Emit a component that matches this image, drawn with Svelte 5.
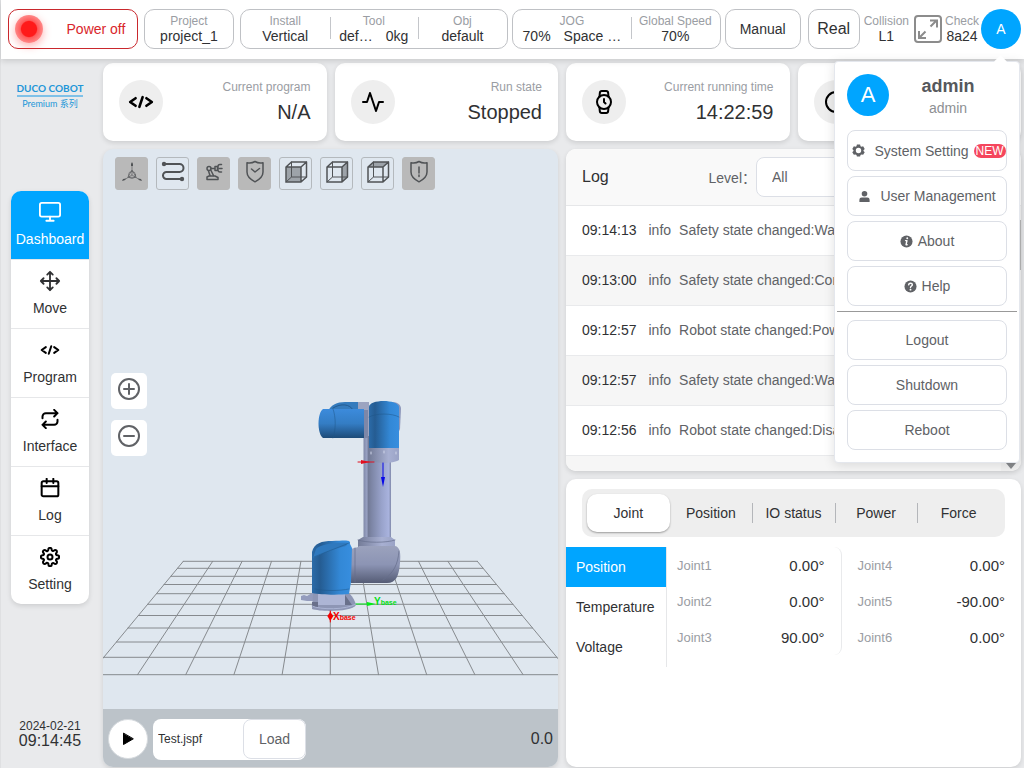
<script lang="ts">
    type LogRow = { time: string; level: string; text: string }
    type Joint = { name: string; value: string }

    const nav = ['Dashboard', 'Move', 'Program', 'Interface', 'Log', 'Setting']
    const tools = [
        { id: 'axes', label: 'Coordinate axes', on: true },
        { id: 'path', label: 'Trajectory', on: false },
        { id: 'arm', label: 'Robot model', on: true },
        { id: 'safe', label: 'Safety planes', on: true },
        { id: 'front', label: 'Front view', on: false },
        { id: 'right', label: 'Right view', on: false },
        { id: 'top', label: 'Top view', on: false },
        { id: 'alert', label: 'Collision shield', on: true },
    ]
    const stats = [
        { icon: 'code', label: 'Current program', value: 'N/A' },
        { icon: 'activity', label: 'Run state', value: 'Stopped' },
        { icon: 'watch', label: 'Current running time', value: '14:22:59' },
        { icon: 'clock', label: '', value: '' },
    ]
    const logs: LogRow[] = [
        { time: '09:14:13', level: 'info', text: 'Safety state changed:Warning' },
        { time: '09:13:00', level: 'info', text: 'Safety state changed:Control' },
        { time: '09:12:57', level: 'info', text: 'Robot state changed:Power' },
        { time: '09:12:57', level: 'info', text: 'Safety state changed:Warning' },
        { time: '09:12:56', level: 'info', text: 'Robot state changed:Disable' },
        { time: '', level: '', text: '' },
    ]
    const tabs = ['Joint', 'Position', 'IO status', 'Power', 'Force']
    const views = ['Position', 'Temperature', 'Voltage']
    const joints: Joint[][] = [
        [
            { name: 'Joint1', value: '0.00°' },
            { name: 'Joint2', value: '0.00°' },
            { name: 'Joint3', value: '90.00°' },
        ],
        [
            { name: 'Joint4', value: '0.00°' },
            { name: 'Joint5', value: '-90.00°' },
            { name: 'Joint6', value: '0.00°' },
        ],
    ]

    // floor grid of the 3D scene
    const center = 330.3
    const gridTop = 561.3
    const gridBottom = 674.7
    const rows = [561.3, 568.3, 576.3, 584.5, 593.7, 604.3, 615.5, 628, 642, 657.3, 674.7]
    const half = (y: number) => 147 + (94 * (y - gridTop)) / (gridBottom - gridTop)
    const cols = [-5, -4, -3, -2, -1, 0, 1, 2, 3, 4, 5]

    let page = $state('Dashboard')
    let tab = $state('Joint')
    let view = $state('Position')
    let level = $state('All')
    let menuOpen = $state(true)
</script>

{#snippet glyph(name: string)}
    <svg class="glyph" viewBox="0 0 24 24" aria-hidden="true">
        {#if name === 'Dashboard'}
            <rect x="1" y="2" width="22" height="15" rx="2" />
            <path d="M8 21.500h8M12 17v4" />
        {:else if name === 'Move'}
            <path d="M5 9l-3 3 3 3M9 5l3-3 3 3M15 19l-3 3-3-3M19 9l3 3-3 3M2 12h20M12 2v20" />
        {:else if name === 'Program' || name === 'code'}
            <path d="M7 8.500l-5 3.500 5 3.500M17 8.500l5 3.500-5 3.500M13.500 7.500l-3 9" />
        {:else if name === 'Interface'}
            <path d="M17 1l4 4-4 4M3 11V9a4 4 0 0 1 4-4h14M7 23l-4-4 4-4M21 13v2a4 4 0 0 1-4 4H3" />
        {:else if name === 'Log'}
            <rect x="2" y="4" width="20" height="18" rx="2" />
            <path d="M16 1v5M8 1v5M2 10h20" />
        {:else if name === 'Setting'}
            <circle cx="12" cy="12" r="3" />
            <path
                d="M19.400 15a1.650 1.650 0 0 0 .33 1.820l.06.06a2 2 0 1 1-2.830 2.830l-.06-.06a1.650 1.650 0 0 0-2.820 1.170V21a2 2 0 0 1-4 0v-.09A1.650 1.650 0 0 0 7.100 19.650l-.06.06a2 2 0 1 1-2.830-2.830l.06-.06A1.650 1.650 0 0 0 3.090 14H3a2 2 0 0 1 0-4h.09A1.650 1.650 0 0 0 4.270 7.180l-.06-.06a2 2 0 1 1 2.830-2.830l.06.06A1.650 1.650 0 0 0 10 3.090V3a2 2 0 0 1 4 0v.09a1.650 1.650 0 0 0 2.820 1.260l.06-.06a2 2 0 1 1 2.830 2.830l-.06.06A1.650 1.650 0 0 0 20.910 10H21a2 2 0 0 1 0 4h-.09a1.650 1.650 0 0 0-1.510 1z"
            />
        {:else if name === 'activity'}
            <path d="M22 12h-4l-3 9L9 3l-3 9H2" />
        {:else if name === 'watch'}
            <circle cx="12" cy="12" r="7" />
            <path
                d="M12 9v3l1.500 1.500M16.500 17.400l-.35 3.800a2 2 0 0 1-2 1.800H9.800a2 2 0 0 1-2-1.800l-.35-3.800M7.500 6.600l.35-3.800a2 2 0 0 1 2-1.800h4.300a2 2 0 0 1 2 1.800l.35 3.800"
            />
        {:else if name === 'clock'}
            <circle cx="12" cy="12" r="10" />
            <path d="M12 6v6l4 2" />
        {/if}
    </svg>
{/snippet}

{#snippet toolIcon(id: string)}
    <svg class="tool-icon" viewBox="1 1 31 31" aria-hidden="true">
        {#if id === 'axes'}
            <g class="thin">
                <path d="M17 7v11L9 23M17 18l8 5" />
                <circle cx="17" cy="18" r="3.500" />
                <path d="M13 20l4-7 4 7z" />
            </g>
            <path class="solid" d="M16 9v-2l1-2 1 2v2zM7 24l1-2 3-.5-1 1.500zM27 24l-1-2-3-.5 1 1.500z" />
        {:else if id === 'path'}
            <g class="thick"><path d="M8 7h15.500a4 4 0 0 1 0 8H10.500a3.500 3.500 0 0 0 0 7H26" /></g>
            <circle class="solid" cx="8" cy="7" r="2.200" />
            <circle class="solid" cx="26" cy="22" r="2.200" />
        {:else if id === 'arm'}
            <path d="M10 22.500v-2.500l2-1h6l3 1.500v2z" />
            <circle cx="12" cy="11.500" r="2" />
            <path d="M11.500 14l1.500 4.500M14 13.500l2.500 5M14 11.500h3.500" />
            <path d="M18 9.500h2.500v4h-2.500zM24.500 7.500h-1.500a2 2 0 0 0-2 2v4a2 2 0 0 0 2 1.500h1.500M22.500 11.500h2.500" />
        {:else if id === 'safe' || id === 'alert'}
            <path d="M17 4.500c-2.500 1.500-5.500 1.800-8 1.200v9.300c0 5 3.500 7.500 8 9.800 4.500-2.300 8-4.800 8-9.800V5.700c-2.500.6-5.500.3-8-1.200z" />
            {#if id === 'safe'}
                <path d="M13.500 12l3.500 3 4.500-3.500" />
            {:else}
                <path d="M17 10v6M17 18v1.500" />
            {/if}
        {:else}
            {#if id === 'front'}
                <path class="face" d="M7 10h15v15H7z" />
            {:else if id === 'right'}
                <path class="face" d="M22 10l5.500-5v15L22 25z" />
            {:else}
                <path class="face" d="M7 10l5.500-5h15L22 10z" />
            {/if}
            <path class="back" d="M12.500 5v15h15M12.500 20L7 25" />
            <path d="M7 10h15v15H7zM7 10l5.500-5h15v15L22 25M22 10l5.500-5" />
        {/if}
    </svg>
{/snippet}

<div class="app">
    <header>
        <button class="box power"><span class="lamp"></span><span class="power-text">Power off</span></button>
        <div class="box project">
            <div class="cell"><span class="label">Project</span><span>project_1</span></div>
        </div>
        <div class="box mount">
            <div class="cell"><span class="label">Install</span><span>Vertical</span></div>
            <div class="cell">
                <span class="label">Tool</span>
                <span class="pair"><span>def…</span><span>0kg</span></span>
            </div>
            <div class="cell"><span class="label">Obj</span><span>default</span></div>
        </div>
        <div class="box speed">
            <div class="cell jog">
                <span class="label">JOG</span>
                <span class="pair"><span>70%</span><span>Space …</span></span>
            </div>
            <div class="cell"><span class="label">Global Speed</span><span>70%</span></div>
        </div>
        <button class="box manual">Manual</button>
        <button class="box real">Real</button>
        <div class="cell collision"><span class="label">Collision</span><span>L1</span></div>
        <div class="account">
            <button class="expand" aria-label="Full screen">
                <svg viewBox="0 0 30 30" aria-hidden="true">
                    <rect x="2" y="2" width="26" height="26" rx="3" />
                    <path d="M17.500 12.500L23 7M17 6.500h7v7M12.500 17.500L6.500 23.500M6 17v7h7" />
                </svg>
            </button>
            <div class="cell"><span class="label">Check</span><span>8a24</span></div>
            <button class="avatar" aria-label="Account" onclick={() => (menuOpen = !menuOpen)}>A</button>
        </div>

        {#if menuOpen}
            <div class="menu">
                <div class="who">
                    <span class="avatar big">A</span>
                    <div class="who-text"><strong>admin</strong><span>admin</span></div>
                </div>
                <button class="tall">
                    <svg class="mini" viewBox="0 0 14 14" aria-hidden="true">
                        <path
                            fill-rule="evenodd"
                            d="M5.300.5h3.400l.5 1.800 1 .6 1.800-.5 1.700 2.900L12.400 6.600v1l1.300 1.200-1.700 2.900-1.800-.5-1 .6-.5 1.700H5.300l-.5-1.700-1-.6-1.800.5L.3 8.800l1.300-1.200v-1L.3 5.300 2 2.400l1.800.5 1-.6zM7 4.100a2.900 2.900 0 1 0 0 5.800 2.900 2.900 0 0 0 0-5.800z"
                        />
                    </svg>
                    <span class="menu-text">System Setting</span>
                    <span class="new">NEW</span>
                </button>
                <button>
                    <svg class="mini" viewBox="0 0 14 14" aria-hidden="true">
                        <circle cx="7" cy="4" r="3" />
                        <path d="M1.500 13v-2.500A2.500 2.500 0 0 1 4 8h6a2.500 2.500 0 0 1 2.500 2.500V13z" />
                    </svg>
                    <span class="menu-text">User Management</span>
                </button>
                <button>
                    <svg class="mini" viewBox="0 0 14 14" aria-hidden="true">
                        <circle cx="7" cy="7" r="6.500" />
                        <path class="mark" d="M6 6h1.500l-1 4.500h1.200" /><circle class="dot" cx="7.800" cy="3.500" r="1" />
                    </svg>
                    About
                </button>
                <button>
                    <svg class="mini" viewBox="0 0 14 14" aria-hidden="true">
                        <circle cx="7" cy="7" r="6.500" />
                        <path class="mark" d="M5 5.200C5.200 3 9 3 9 5.200c0 1.300-2 1.400-2 3" /><circle class="dot" cx="7" cy="10.400" r="1" />
                    </svg>
                    Help
                </button>
                <hr />
                <button>Logout</button>
                <button>Shutdown</button>
                <button>Reboot</button>
            </div>
        {/if}
    </header>

    <div class="body">
        <aside>
            <div class="logo">
                <span class="brand">DUCO COBOT</span>
                <span class="edition">Premium 系列</span>
            </div>
            <nav>
                {#each nav as item}
                    <a href="#{item.toLowerCase()}" class={[page === item && 'active', item !== 'Move' && 'black']} onclick={() => (page = item)}>
                        {@render glyph(item)}
                        <span>{item}</span>
                    </a>
                {/each}
            </nav>
            <div class="now"><span>2024-02-21</span><span class="clock">09:14:45</span></div>
        </aside>

        <main>
            <section class="stats">
                {#each stats as stat}
                    <div class="card stat">
                        <span class={['stat-icon', stat.icon]}>{@render glyph(stat.icon)}</span>
                        <div class="stat-text">
                            <span class="stat-label">{stat.label}</span>
                            <span class="stat-value">{stat.value}</span>
                        </div>
                    </div>
                {/each}
            </section>

            <section class="panels">
                <div class="card viewer">
                    <div class="stage">
                        <svg class="scene" viewBox="103 149 455 560" preserveAspectRatio="xMidYMid slice" role="img" aria-label="Robot model">
                            <defs>
                                <linearGradient id="tube">
                                    <stop offset="0" stop-color="#8089a8" />
                                    <stop offset=".12" stop-color="#98a1c2" />
                                    <stop offset=".18" stop-color="#737b97" />
                                    <stop offset=".3" stop-color="#7d86a6" />
                                    <stop offset=".65" stop-color="#98a2ca" />
                                    <stop offset=".92" stop-color="#a9b3de" />
                                    <stop offset="1" stop-color="#7f88a8" />
                                </linearGradient>
                                <linearGradient id="blue-v">
                                    <stop offset="0" stop-color="#2b6ba8" />
                                    <stop offset=".2" stop-color="#255c92" />
                                    <stop offset=".7" stop-color="#3388d6" />
                                    <stop offset="1" stop-color="#378edf" />
                                </linearGradient>
                                <linearGradient id="blue-h" x2="0" y2="1">
                                    <stop offset="0" stop-color="#3c8bdc" />
                                    <stop offset=".5" stop-color="#347dc4" />
                                    <stop offset="1" stop-color="#1d4b78" />
                                </linearGradient>
                                <linearGradient id="metal" x2="0" y2="1">
                                    <stop offset="0" stop-color="#9ba2bd" />
                                    <stop offset=".5" stop-color="#8c94b4" />
                                    <stop offset="1" stop-color="#555c75" />
                                </linearGradient>
                                <linearGradient id="wrist">
                                    <stop offset="0" stop-color="#737b97" />
                                    <stop offset=".65" stop-color="#a8b0d2" />
                                    <stop offset="1" stop-color="#9aa3c6" />
                                </linearGradient>
                            </defs>

                            <g class="floor">
                                {#each rows as y}
                                    <line x1={center - half(y)} x2={center + half(y)} y1={y} y2={y} />
                                {/each}
                                {#each cols as i}
                                    <line x1={center + i * 29.4} x2={center + i * 48.2} y1={gridTop} y2={gridBottom} />
                                {/each}
                            </g>

                            <!-- upper arm and elbow -->
                            <rect x="363.500" y="428" width="27.500" height="113" fill="url(#tube)" />
                            <path d="M354 402h15v34h-15z" fill="#9ca4c0" />
                            <path d="M328 411c3-6 9-9 17-9h13v10h-30z" fill="#347bbd" />
                            <path d="M333 408c8-5 17-4 20 2" fill="none" stroke="#235b91" />
                            <path d="M323 409h41v29h-41c-6-4-6-25 0-29z" fill="url(#blue-h)" />
                            <path d="M333 409c3 8 3 21 0 29" class="seam" />
                            <path d="M364 410h4v28h-4z" fill="#7d87a8" />

                            <!-- wrist -->
                            <path d="M392 402c6 0 9 3 9 7l-1 20-3 7z" fill="#8e98bb" />
                            <path d="M369 448h30v12c-6 4-24 4-30 0z" fill="url(#wrist)" />
                            <path d="M369 407c0-8 29-8 30 0v41h-30z" fill="url(#blue-v)" />
                            <path d="M369 417c7-4 23-4 30 0" class="seam" />
                            <path d="M371 452v2M396 452v2M384 451v2" stroke="#d0d6ea" />

                            <!-- lower joint -->
                            <path d="M363 537h28l4 3v9h-37v-9z" fill="url(#wrist)" />
                            <path d="M351 549c5-2 7-1 8-3h36c5 1 6 7 5 17-1 13-4 20-13 20h-36z" fill="url(#metal)" />
                            <path d="M358 540c8 3 29 3 37 0M355 548v34M399 551c-1 13-5 22-16 29" class="groove" />

                            <!-- shoulder and base -->
                            <path d="M304 595l3 1 5-3h5v8h-10l-6-1v-4z" fill="#949cbd" />
                            <path d="M313 594h37c3 3 5 7 6 11-4 7-35 7-44 4z" fill="#8e96b5" />
                            <path d="M318 594h27v11h-27z" fill="#adb5d5" />
                            <path d="M345 595l7 10h-7zM312 602h6v5h-6z" fill="#69708b" />
                            <path d="M312 606c8 4 35 4 44-2" fill="none" stroke="#abb4d4" />
                            <path d="M312 552c2-9 10-11 20-11 12 0 19-2 18 3l2 4-1 34-2 12c-9 1-28 1-37-1z" fill="url(#blue-v)" />
                            <path d="M316 549c4-5 22-7 32-6l-2 3c-13 3-23 7-33 12z" fill="#2f79be" />
                            <path d="M314 557c11-5 21-8 35-14M315 589c10 2 24 2 34 0" class="seam" />

                            <!-- frames -->
                            <path d="M358 462h16" stroke="#e01020" />
                            <path d="M370 462l-9-2v4z" fill="#e01020" />
                            <path d="M383 463v16" stroke="#0808e8" />
                            <path d="M383 487l-2-10h4z" fill="#0808e8" />
                            <path d="M356 604h12" stroke="#00ef16" />
                            <path d="M376 604l-9-2v4z" fill="#00ef16" />
                            <path d="M330.300 611v11" stroke="#f40000" />
                            <path d="M330.300 612l3 4-3 5-3-5z" fill="#f40000" />
                            <text x="333" y="620" fill="#f40000"><tspan class="axis">X</tspan>base</text>
                            <text x="374" y="605" fill="#00df14"><tspan class="axis">Y</tspan>base</text>
                        </svg>

                        <div class="toolbar">
                            {#each tools as tool}
                                <button class={['tool', tool.on && 'on']} aria-label={tool.label}>{@render toolIcon(tool.id)}</button>
                            {/each}
                        </div>
                        <div class="zoom">
                            <button aria-label="Zoom in">
                                <svg viewBox="0 0 24 24" aria-hidden="true"><circle cx="12" cy="12" r="10" /><path d="M12 7v10M7 12h10" /></svg>
                            </button>
                            <button aria-label="Zoom out">
                                <svg viewBox="0 0 24 24" aria-hidden="true"><circle cx="12" cy="12" r="10" /><path d="M7 12h10" /></svg>
                            </button>
                        </div>
                    </div>
                    <div class="player">
                        <button class="play" aria-label="Play">
                            <svg viewBox="0 0 12 14" aria-hidden="true"><path d="M1.500 1.500v11L11 7z" /></svg>
                        </button>
                        <div class="file">
                            <input aria-label="Program file" value="Test.jspf" />
                            <button class="load">Load</button>
                        </div>
                        <span class="progress">0.0</span>
                    </div>
                </div>

                <div class="side">
                    <div class="card log">
                        <div class="log-head">
                            <h2>Log</h2>
                            <label for="level">Level：</label>
                            <select id="level" bind:value={level}>
                                <option>All</option>
                            </select>
                        </div>
                        <div class="log-body">
                            <ul>
                                {#each logs as row}
                                    <li>
                                        <time>{row.time}</time>
                                        <span class="level">{row.level}</span>
                                        <span>{row.text}</span>
                                    </li>
                                {/each}
                            </ul>
                            <div class="scrollbar"><span class="thumb"></span><span class="down"></span></div>
                        </div>
                    </div>

                    <div class="card status">
                        <div class="tabs">
                            {#each tabs as item}
                                <button class={tab === item ? 'active' : ''} onclick={() => (tab = item)}>{item}</button>
                            {/each}
                        </div>
                        <div class="values">
                            <div class="views">
                                {#each views as item}
                                    <button class={view === item ? 'active' : ''} onclick={() => (view = item)}>{item}</button>
                                {/each}
                            </div>
                            {#each joints as group}
                                <dl>
                                    {#each group as joint}
                                        <div><dt>{joint.name}</dt><dd>{joint.value}</dd></div>
                                    {/each}
                                </dl>
                            {/each}
                        </div>
                    </div>
                </div>
            </section>
        </main>
    </div>
</div>

<style>
    :global(body) {
        margin: 0;
        background: #e9eaec;
        color: #303133;
        font-family: 'Liberation Sans', 'Noto Sans CJK SC', sans-serif;
        font-size: 14px;
    }

    * {
        box-sizing: border-box;
    }

    button,
    input,
    select {
        font: inherit;
        color: inherit;
        margin: 0;
        padding: 0;
        border: 0;
        background: none;
    }

    button {
        cursor: pointer;
    }

    svg {
        display: block;
        fill: none;
        stroke-linecap: round;
        stroke-linejoin: round;
    }

    .app {
        display: flex;
        flex-direction: column;
        height: 100vh;
        min-height: 640px;
        border-left: 1px solid #dfe0e2;
    }

    header {
        position: relative;
        z-index: 2;
        display: flex;
        gap: 4px;
        padding: 9px 3px 10px 7px;
        background: #fff;
        box-shadow: 0 2px 6px rgba(0, 0, 0, 0.14);
    }

    .box {
        display: flex;
        align-items: center;
        justify-content: center;
        height: 40px;
        border: 1px solid #bfc1c5;
        border-radius: 10px;
        background: #fff;
    }

    .power {
        flex: 1 1 130px;
        justify-content: flex-start;
        gap: 20px;
        margin-right: 2px;
        padding-left: 6px;
        border-color: #c9282d;
        color: #d9262b;
    }

    .power-text {
        flex: 1;
        padding-right: 8px;
    }

    .lamp {
        width: 28px;
        height: 28px;
        border-radius: 50%;
        background: radial-gradient(circle, #ff1a1a 38%, #ff5c5c 44%, #ff8a8a 72%);
        box-shadow: 0 3px 8px rgba(255, 60, 60, 0.4);
    }

    .project {
        flex: 1 1 90px;
        margin-right: 2px;
    }

    .mount {
        flex: 1 1 268px;
    }

    .speed {
        flex: 1 1 209px;
    }

    .manual {
        flex: 1 1 76px;
    }

    .real {
        flex: 1 1 52px;
        margin-left: 3px;
        font-size: 16px;
    }

    .cell {
        display: flex;
        flex: 1;
        flex-direction: column;
        align-items: center;
        justify-content: center;
        line-height: 16px;
        white-space: nowrap;
    }

    .box .cell + .cell {
        position: relative;
    }

    .box .cell + .cell::before {
        content: '';
        position: absolute;
        left: 0;
        top: 3px;
        bottom: 5px;
        width: 1px;
        background: #c4c6ca;
    }

    .label {
        color: #9a9da3;
        font-size: 12px;
        line-height: 14px;
    }

    .pair {
        display: flex;
        gap: 13px;
    }

    .jog {
        flex: 4;
    }

    .jog + .cell {
        flex: 3;
    }

    .collision {
        flex: none;
    }

    .account {
        display: flex;
        align-items: center;
        gap: 2px;
    }

    .expand svg {
        width: 30px;
        height: 30px;
        stroke: #8c8c8c;
        stroke-width: 2;
        stroke-linecap: butt;
        stroke-linejoin: miter;
    }

    .avatar {
        display: grid;
        place-items: center;
        width: 40px;
        height: 40px;
        border-radius: 50%;
        background: #00a5ff;
        color: #fff;
    }

    .avatar.big {
        width: 42px;
        height: 42px;
        font-size: 22px;
    }

    .menu {
        position: absolute;
        top: 61px;
        right: 4px;
        display: flex;
        flex-direction: column;
        gap: 5px;
        width: 186px;
        padding: 12px;
        border: 1px solid #e4e7ed;
        border-radius: 4px;
        background: #fff;
        color: #606266;
        box-shadow: 0 2px 12px rgba(0, 0, 0, 0.12);
    }

    .menu::before {
        content: '';
        position: absolute;
        top: -5px;
        right: 14px;
        width: 9px;
        height: 9px;
        background: #fff;
        rotate: 45deg;
    }

    .who {
        display: flex;
        margin-bottom: 9px;
        height: 42px;
    }

    .who-text {
        display: flex;
        flex: 1;
        flex-direction: column;
        align-items: center;
        line-height: 20px;
        color: #8d8f93;
    }

    .who strong {
        color: #56585c;
        font-size: 18px;
        line-height: 24px;
    }

    .menu button {
        display: flex;
        align-items: center;
        justify-content: center;
        gap: 5px;
        height: 40px;
        border: 1px solid #dcdfe6;
        border-radius: 8px;
        white-space: nowrap;
    }

    .menu .tall {
        height: 41px;
        padding-left: 4px;
    }

    .menu-text {
        margin-left: 4px;
    }

    .new {
        padding: 0 2px;
        border-radius: 8px;
        background: #f5465d;
        color: #fff;
        font-size: 12px;
        line-height: 14px;
    }

    .menu hr {
        align-self: stretch;
        height: 1px;
        margin: 0 -10px 3px;
        border: 0;
        background: #999;
    }

    .mini {
        width: 13px;
        height: 13px;
        fill: #606266;
    }

    .mini .mark {
        fill: none;
        stroke: #fff;
        stroke-width: 1.5;
    }

    .mini .dot {
        fill: #fff;
    }

    .body {
        display: flex;
        flex: 1;
        min-height: 0;
    }

    aside {
        display: flex;
        flex-direction: column;
        width: 102px;
        padding: 22px 14px 19px 10px;
    }

    .logo {
        display: flex;
        flex-direction: column;
        align-items: center;
        margin-bottom: 80px;
        color: #2196d8;
        white-space: nowrap;
    }

    .brand {
        border-bottom: 2px solid #7fc1e8;
        font-family: Lato, sans-serif;
        font-size: 10px;
        font-weight: bold;
        line-height: 14px;
    }

    .edition {
        font-family: Lato, 'Noto Sans CJK SC', sans-serif;
        font-size: 9px;
        line-height: 14px;
    }

    nav {
        overflow: hidden;
        border-radius: 10px;
        background: #fff;
        box-shadow: 0 2px 5px rgba(0, 0, 0, 0.12);
    }

    nav a {
        display: flex;
        flex-direction: column;
        align-items: center;
        gap: 6px;
        padding: 10px 0;
        color: #303133;
        line-height: 20px;
        text-decoration: none;
    }

    nav a + a {
        border-top: 1px solid #e6e7e9;
    }

    nav a.active {
        background: #00a5ff;
        color: #fff;
    }

    .glyph {
        stroke: currentColor;
        stroke-width: 2;
    }

    nav .glyph {
        box-sizing: border-box;
        width: 22px;
        height: 22px;
    }

    nav .black:not(.active) .glyph {
        padding: 1px;
        stroke: #000;
        stroke-width: 2.4;
    }

    .now {
        display: flex;
        flex-direction: column;
        align-items: center;
        margin-top: auto;
        font-size: 12px;
        line-height: 14px;
    }

    .clock {
        font-size: 16px;
        line-height: 16px;
    }

    main {
        display: flex;
        flex: 1;
        flex-direction: column;
        gap: 8px;
        min-width: 0;
        padding: 4px 3px 1px 0;
    }

    .card {
        overflow: hidden;
        border-radius: 10px;
        background: #fff;
        box-shadow: 0 2px 5px rgba(0, 0, 0, 0.12);
    }

    .stats {
        display: grid;
        grid-template-columns: repeat(4, 1fr);
        gap: 8px;
    }

    .stat {
        display: flex;
        align-items: center;
        justify-content: space-between;
        padding: 17px 16px;
    }

    .stat-icon {
        display: grid;
        place-items: center;
        width: 44px;
        height: 44px;
        border-radius: 50%;
        background: #eee;
        color: #000;
    }

    .stat-icon .glyph {
        width: 24px;
        height: 24px;
    }

    .code .glyph {
        width: 26px;
        height: 26px;
        stroke-width: 2.4;
    }

    .stat-text {
        display: flex;
        flex-direction: column;
        align-items: flex-end;
        gap: 5px;
    }

    .stat-label {
        color: #9a9da3;
        font-size: 12px;
        line-height: 15px;
    }

    .stat-value {
        font-size: 20px;
        line-height: 24px;
    }

    .panels {
        display: grid;
        flex: 1;
        grid-template-columns: 1fr 1fr;
        gap: 8px;
        min-height: 0;
    }

    .viewer {
        display: flex;
        flex-direction: column;
        background: #dfe7ef;
    }

    .stage {
        position: relative;
        flex: 1;
        min-height: 0;
    }

    .scene {
        position: absolute;
        inset: 0;
        width: 100%;
        height: 100%;
    }

    .scene text {
        font-size: 7px;
        font-weight: bold;
    }

    .scene .axis {
        font-size: 10px;
    }

    .floor line {
        stroke: #868a8e;
        stroke-width: 1;
    }

    .seam {
        stroke: #1f5688;
        stroke-width: 0.5;
    }

    .groove {
        stroke: #666e8c;
        stroke-width: 0.7;
    }

    .toolbar {
        position: relative;
        display: flex;
        gap: 8px;
        padding: 8px 12px;
    }

    .tool {
        width: 33px;
        height: 33px;
        border: 1px solid #b4b9bd;
        border-radius: 3px;
    }

    .tool.on {
        border-color: #b9b9b9;
        background: #b9b9b9;
    }

    .tool-icon {
        width: 31px;
        height: 31px;
        stroke: #505356;
        stroke-width: 1.5;
    }

    .tool-icon .thin {
        stroke-width: 0.6;
    }

    .tool-icon .thick {
        stroke-width: 2;
    }

    .tool-icon .solid {
        fill: #505356;
        stroke: none;
    }

    .tool-icon .face {
        fill: #9da3a9;
        stroke: none;
    }

    .tool-icon .back {
        stroke-width: 1;
    }

    .zoom {
        position: absolute;
        left: 8px;
        top: 40%;
        display: flex;
        flex-direction: column;
        gap: 11px;
    }

    .zoom button {
        display: flex;
        justify-content: center;
        width: 36px;
        height: 36px;
        padding-top: 4px;
        border-radius: 5px;
        background: #fff;
    }

    .zoom svg {
        width: 24px;
        height: 24px;
        stroke: #606266;
        stroke-width: 2;
    }

    .player {
        display: flex;
        align-items: center;
        gap: 5px;
        height: 58px;
        padding: 2px 5px 0;
        background: #bcc3c9;
    }

    .play {
        display: grid;
        place-items: center;
        width: 40px;
        height: 40px;
        border: 1px solid #d6dade;
        border-radius: 50%;
        background: #fff;
    }

    .play svg {
        width: 12px;
        height: 14px;
        fill: #000;
        stroke: #000;
    }

    .file {
        display: flex;
        width: 153px;
        height: 41px;
        border-radius: 8px;
        background: #fff;
    }

    .file input {
        flex: 1;
        min-width: 0;
        padding-left: 5px;
        font-size: 12px;
    }

    .load {
        width: 63px;
        height: 40px;
        border: 1px solid #dcdfe6;
        border-radius: 8px;
        color: #606266;
    }

    .progress {
        margin-left: auto;
        font-size: 16px;
    }

    .side {
        display: flex;
        flex-direction: column;
        gap: 8px;
        min-width: 0;
        min-height: 0;
    }

    .log {
        display: flex;
        flex: 322 0 0;
        flex-direction: column;
        min-height: 0;
    }

    .log-head {
        display: flex;
        flex: none;
        align-items: center;
        height: 57px;
        padding: 0 16px;
        border-bottom: 1px solid #e6e7e9;
        background: #f9f9f9;
        color: #606266;
    }

    .log-head h2 {
        flex: 1;
        margin: 0;
        color: #303133;
        font-size: 16px;
        font-weight: normal;
    }

    .log-head select {
        width: 249px;
        height: 40px;
        padding: 0 15px;
        border: 1px solid #dcdfe6;
        border-radius: 8px;
        background: #fff;
        appearance: none;
    }

    .log-body {
        display: flex;
        flex: 1;
        min-height: 0;
    }

    .log ul {
        flex: 1;
        overflow: hidden;
        margin: 0;
        padding: 0;
        list-style: none;
    }

    .log li {
        display: flex;
        align-items: center;
        height: 50px;
        padding: 0 16px 1px;
        border-bottom: 1px solid #e9eaec;
        color: #606266;
        white-space: nowrap;
    }

    .log li:nth-child(even) {
        background: #f6f6f6;
    }

    .log time {
        margin-right: 12px;
        color: #303133;
    }

    .level {
        margin-right: 8px;
    }

    .scrollbar {
        display: flex;
        flex-direction: column;
        align-items: center;
        justify-content: space-between;
        width: 20px;
        padding: 14px 0 2px;
        background: #f1f1f1;
    }

    .thumb {
        width: 20px;
        height: 50px;
        background: #b5b5b5;
    }

    .down {
        border: 5px solid transparent;
        border-top: 6px solid #87898c;
        border-bottom: 0;
    }

    .status {
        flex: 288 0 0;
        min-height: 0;
    }

    .tabs {
        display: flex;
        margin: 10px 16px;
        padding: 5px;
        border-radius: 10px;
        background: #eee;
    }

    .tabs button {
        position: relative;
        flex: 1;
        height: 38px;
        border-radius: 10px;
    }

    .tabs .active {
        background: #fff;
        box-shadow: 0 1px 2px rgba(0, 0, 0, 0.35);
    }

    .tabs button:nth-child(n + 3)::before {
        content: '';
        position: absolute;
        left: 0;
        top: 9px;
        width: 1px;
        height: 20px;
        background: #b4b6ba;
    }

    .values {
        display: flex;
        align-items: flex-start;
    }

    .views {
        display: flex;
        flex-direction: column;
        width: 101px;
        border-right: 1px solid #e6e7e9;
    }

    .views button {
        height: 40px;
        padding-left: 10px;
        text-align: left;
    }

    .views .active {
        background: #00a5ff;
        color: #fff;
    }

    dl {
        flex: 1;
        margin: 0;
        padding: 0 16px 0 10px;
        border-right: 1px solid #e9eaec;
        border-radius: 8px;
    }

    dl:last-child {
        padding-left: 16px;
        border-right: 0;
    }

    dl div {
        display: flex;
        align-items: center;
        justify-content: space-between;
        height: 36px;
    }

    dt {
        color: #9a9da3;
        font-size: 13px;
    }

    dd {
        margin: 0;
        font-size: 15px;
    }
</style>
